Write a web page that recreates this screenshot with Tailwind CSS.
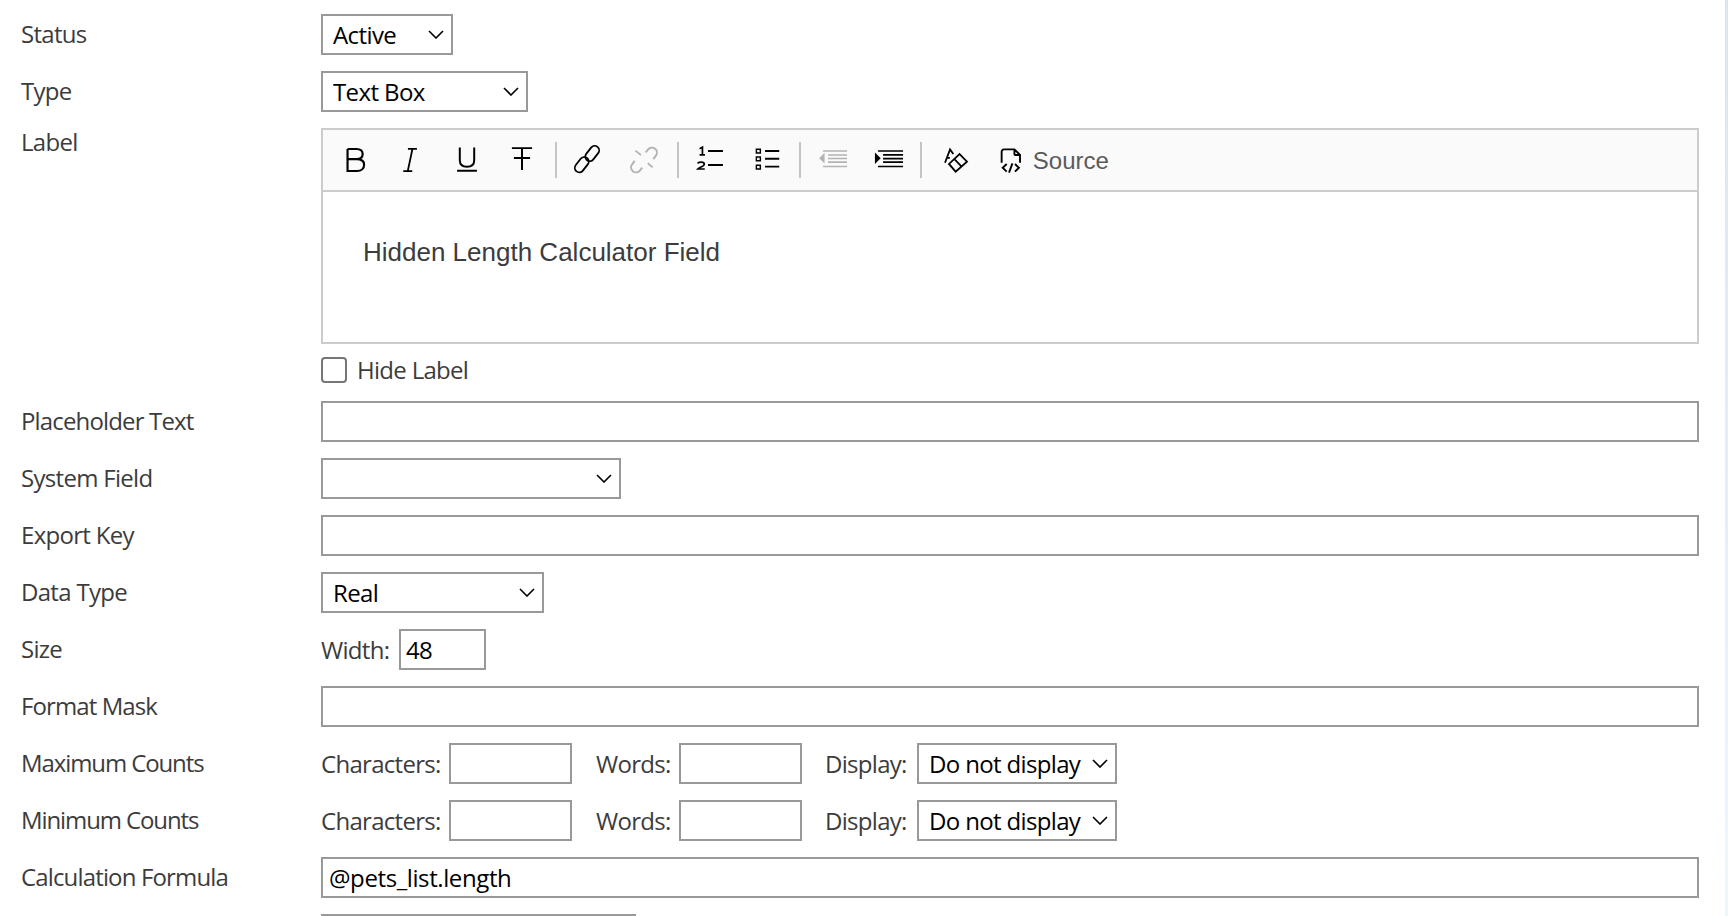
<!doctype html>
<html><head><meta charset="utf-8"><script src="https://cdn.jsdelivr.net/npm/@tailwindcss/browser@4"></script></head>
<body class="bg-white overflow-hidden">
<div class="flex h-[916px] w-[1728px] overflow-hidden bg-white font-['Open_Sans',sans-serif] text-[24px] text-[#3c3c3c]">
  <main class="flex-1 min-w-0 pt-[14px] pl-[21px] pr-[26px] flex flex-col gap-4 tracking-[-0.7px]">

    <div class="flex h-[41px] shrink-0 items-center"><label class="w-[300px] shrink-0 pb-[2px] tracking-[-0.7px]">Status</label>
      <div class="relative w-[132px] h-[41px]"><select class="appearance-none w-full h-full border-2 border-[#999] pl-[10px] text-black bg-white tracking-[-0.6px]"><option>Active</option></select><svg class="absolute right-[9px] top-[16px] w-[16px] h-[9px]" viewBox="0 0 16 9" fill="none" stroke="#000" stroke-width="1.6"><path d="M1 1l7 7 7-7"/></svg></div></div>

    <div class="flex h-[41px] shrink-0 items-center"><label class="w-[300px] shrink-0 pb-[2px]">Type</label>
      <div class="relative w-[207px] h-[41px]"><select class="appearance-none w-full h-full border-2 border-[#999] pl-[10px] text-black bg-white tracking-[-0.6px]"><option>Text Box</option></select><svg class="absolute right-[9px] top-[16px] w-[16px] h-[9px]" viewBox="0 0 16 9" fill="none" stroke="#000" stroke-width="1.6"><path d="M1 1l7 7 7-7"/></svg></div></div>

    <div class="flex shrink-0 items-start"><label class="w-[300px] shrink-0 h-[28px] flex items-center">Label</label>
      <div class="flex-1 min-w-0 flex flex-col">
        <div class="border-2 border-[#ccc] h-[216px] flex flex-col tracking-normal">
          <div class="h-[62px] shrink-0 border-b-2 border-[#ccc] bg-[#fafafa] flex items-center pl-[14.5px] text-[#000]">
            <svg class="w-9 h-9 shrink-0" viewBox="0 0 20 20" fill="none" stroke="currentColor" stroke-width="1.2"><path d="M5.3 3.9h4.9c2.3 0 3.5 1 3.5 2.8 0 1.7-1.2 2.8-3.3 2.8H5.3M10.4 9.5c2.6 0 4.1 1.1 4.1 3.1 0 2-1.5 3.5-4 3.5H5.3V3.9"/></svg>
            <svg class="w-9 h-9 shrink-0 ml-[19.5px]" viewBox="0 0 20 20" fill="none" stroke="currentColor" stroke-width="1"><path d="M8.3 3.8h5M5.7 16.2h5M10.8 3.8 8.2 16.2"/></svg>
            <svg class="w-9 h-9 shrink-0 ml-[19.5px]" viewBox="0 0 20 20" fill="none" stroke="currentColor" stroke-width="1.1"><path d="M4.5 16H15.5M6 3v7.2c0 2.4 1.5 3.6 4 3.6s4-1.2 4-3.6V3"/></svg>
            <svg class="w-9 h-9 shrink-0 ml-[19.5px]" viewBox="0 0 20 20" fill="none" stroke="currentColor" stroke-width="1.1"><path d="M4.4 3.4H15.6M5.5 8.9H14.5M10 3.4V15.6"/></svg>
            <span class="w-[2px] h-9 bg-[#c4c4c4] shrink-0 ml-[14.7px]"></span>
            <svg class="w-9 h-9 shrink-0 ml-[12.8px]" viewBox="0 0 20 20" fill="none" stroke="currentColor" stroke-width="1"><rect x="-4.7" y="-2.5" width="9.4" height="5" rx="2.5" transform="translate(12.9 6.4) rotate(-52)"/><rect x="-4.7" y="-2.5" width="9.4" height="5" rx="2.5" transform="translate(7.1 12.6) rotate(-52)"/></svg>
            <svg class="w-9 h-9 shrink-0 ml-[20.5px] text-[#b3b3b3]" viewBox="0 0 20 20" fill="none" stroke="currentColor" stroke-width="1.1"><path d="M11 5.8l1.3-1.7a2.7 2.7 0 0 1 4.2 3.6L15.2 9.6M9 14.2l-1.3 1.7a2.7 2.7 0 0 1-4.2-3.6l1.3-1.9"/><path d="M5.2 4.8 8.3 7.2M12.1 11.8l2.7 2.3" stroke-width="1"/></svg>
            <span class="w-[2px] h-9 bg-[#c4c4c4] shrink-0 ml-[15.2px]"></span>
            <svg class="w-9 h-9 shrink-0 ml-[12.5px]" viewBox="0 0 20 20" fill="none" stroke="currentColor"><path d="M8.9 5H17.2M8.9 12.8H17.2" stroke-width="1.1"/><path d="M4.2 3.7 5.8 2.9V7.2M4.2 7.2H7.2M3.2 12c.3-1 3.6-1.2 3.6.3 0 1.2-2.6 1.6-3.6 2.7h3.9" stroke-width=".95"/></svg>
            <svg class="w-9 h-9 shrink-0 ml-[21px]" viewBox="0 0 20 20" fill="none" stroke="currentColor"><path d="M8.9 5H16.8M8.9 9.3H16.8M8.9 13.7H16.8" stroke-width="1"/><path d="M4.1 4h2.2v2.1H4.1zM4.1 8.3h2.2v2.1H4.1zM4.1 12.9h2.2V15H4.1z" stroke-width=".8"/></svg>
            <span class="w-[2px] h-9 bg-[#c4c4c4] shrink-0 ml-[14.4px]"></span>
            <svg class="w-9 h-9 shrink-0 ml-[13.5px] text-[#b3b3b3]" viewBox="0 0 20 20" fill="none" stroke="currentColor" stroke-width=".9"><path d="M4.5 5H17.8M7.2 7.2H17.8M7.2 9.2H17.8M7.2 11.2H17.8M4.5 13.6H17.8"/><path d="M2.3 9 5.3 6v6z" fill="currentColor" stroke="none"/></svg>
            <svg class="w-9 h-9 shrink-0 ml-[20px]" viewBox="0 0 20 20" fill="none" stroke="currentColor" stroke-width=".95"><path d="M3.9 5H17.8M6.7 7.2H17.8M6.7 9.2H17.8M6.7 11.2H17.8M3.9 13.6H17.8"/><path d="M2.2 5.9 5.4 9l-3.2 3.2z" fill="currentColor" stroke="none"/></svg>
            <span class="w-[2px] h-9 bg-[#c4c4c4] shrink-0 ml-[13.6px]"></span>
            <svg class="w-9 h-9 shrink-0 ml-[15.7px]" viewBox="0 0 20 20" fill="none" stroke="currentColor" stroke-width="1"><path d="M3.9 11.5 6.7 4.1 8.5 6.7M4.9 8.8H6.6"/><path d="M12 6.7 16.1 10.9 9.8 16.5 6.1 12.2zM9 9.4 13.1 13.7"/></svg>
            <svg class="w-9 h-9 shrink-0 ml-[19px]" viewBox="0 0 20 20" fill="none" stroke="currentColor" stroke-width="1.05"><path d="M4.8 11.5V5.4a1.3 1.3 0 0 1 1.3-1.3H11.9L15 7.2V11.5M11.9 4.1V6.7a.5.5 0 0 0 .5.5H15M7.6 12.2 5.4 14.3 7.6 16.5M12.2 12.2 14.4 14.3 12.2 16.5M10.8 11.9 8.9 17"/></svg>
            <span class="ml-[4px] mt-[2px] font-['Liberation_Sans',sans-serif] text-[24px] text-[#5a5a5a] leading-none">Source</span>
          </div>
          <div class="flex-1 pt-[41px] pl-[40px] font-['Liberation_Sans',sans-serif] text-[26px] leading-[39px] text-[#3c3c3c]">Hidden Length Calculator Field</div>
        </div>
        <div class="mt-[13px] h-[28px] flex items-start">
          <input type="checkbox" class="appearance-none w-[26px] h-[26px] border-2 border-[#767676] rounded-[4px] bg-white shrink-0">
          <span class="ml-[10px] leading-[26px]">Hide Label</span>
        </div>
      </div>
    </div>

    <div class="flex h-[41px] shrink-0 items-center"><label class="w-[300px] shrink-0 pb-[2px] tracking-[-0.85px]">Placeholder Text</label>
      <input type="text" class="flex-1 min-w-0 h-[41px] border-2 border-[#999] bg-white"></div>

    <div class="flex h-[41px] shrink-0 items-center"><label class="w-[300px] shrink-0 pb-[2px]">System Field</label>
      <div class="relative w-[300px] h-[41px]"><select class="appearance-none w-full h-full border-2 border-[#999] pl-[10px] text-black bg-white"><option></option></select><svg class="absolute right-[9px] top-[16px] w-[16px] h-[9px]" viewBox="0 0 16 9" fill="none" stroke="#000" stroke-width="1.6"><path d="M1 1l7 7 7-7"/></svg></div></div>

    <div class="flex h-[41px] shrink-0 items-center"><label class="w-[300px] shrink-0 pb-[2px]">Export Key</label>
      <input type="text" class="flex-1 min-w-0 h-[41px] border-2 border-[#999] bg-white"></div>

    <div class="flex h-[41px] shrink-0 items-center"><label class="w-[300px] shrink-0 pb-[2px]">Data Type</label>
      <div class="relative w-[223px] h-[41px]"><select class="appearance-none w-full h-full border-2 border-[#999] pl-[10px] text-black bg-white tracking-[-0.6px]"><option>Real</option></select><svg class="absolute right-[9px] top-[16px] w-[16px] h-[9px]" viewBox="0 0 16 9" fill="none" stroke="#000" stroke-width="1.6"><path d="M1 1l7 7 7-7"/></svg></div></div>

    <div class="flex h-[41px] shrink-0 items-center"><label class="w-[300px] shrink-0 pb-[2px]">Size</label>
      <span class="w-[78px] shrink-0">Width:</span>
      <input type="text" value="48" class="w-[87px] h-[41px] border-2 border-[#999] pl-[5px] text-black bg-white tracking-[-0.6px]"></div>

    <div class="flex h-[41px] shrink-0 items-center"><label class="w-[300px] shrink-0 pb-[2px] tracking-[-0.9px]">Format Mask</label>
      <input type="text" class="flex-1 min-w-0 h-[41px] border-2 border-[#999] bg-white"></div>

    <div class="flex h-[41px] shrink-0 items-center"><label class="w-[300px] shrink-0 pb-[2px] tracking-[-1.1px]">Maximum Counts</label>
      <span class="w-[128px] shrink-0">Characters:</span>
      <input type="text" class="w-[123px] h-[41px] border-2 border-[#999] bg-white">
      <span class="w-[83px] shrink-0 ml-[24px]">Words:</span>
      <input type="text" class="w-[123px] h-[41px] border-2 border-[#999] bg-white">
      <span class="w-[92px] shrink-0 ml-[23px]">Display:</span>
      <div class="relative w-[200px] h-[41px]"><select class="appearance-none w-full h-full border-2 border-[#999] pl-[10px] text-black bg-white tracking-[-0.65px]"><option>Do not display</option></select><svg class="absolute right-[9px] top-[16px] w-[16px] h-[9px]" viewBox="0 0 16 9" fill="none" stroke="#000" stroke-width="1.6"><path d="M1 1l7 7 7-7"/></svg></div></div>

    <div class="flex h-[41px] shrink-0 items-center"><label class="w-[300px] shrink-0 pb-[2px] tracking-[-1.1px]">Minimum Counts</label>
      <span class="w-[128px] shrink-0">Characters:</span>
      <input type="text" class="w-[123px] h-[41px] border-2 border-[#999] bg-white">
      <span class="w-[83px] shrink-0 ml-[24px]">Words:</span>
      <input type="text" class="w-[123px] h-[41px] border-2 border-[#999] bg-white">
      <span class="w-[92px] shrink-0 ml-[23px]">Display:</span>
      <div class="relative w-[200px] h-[41px]"><select class="appearance-none w-full h-full border-2 border-[#999] pl-[10px] text-black bg-white tracking-[-0.65px]"><option>Do not display</option></select><svg class="absolute right-[9px] top-[16px] w-[16px] h-[9px]" viewBox="0 0 16 9" fill="none" stroke="#000" stroke-width="1.6"><path d="M1 1l7 7 7-7"/></svg></div></div>

    <div class="flex h-[41px] shrink-0 items-center"><label class="w-[300px] shrink-0 pb-[2px] tracking-[-0.85px]">Calculation Formula</label>
      <input type="text" value="@pets_list.length" class="flex-1 min-w-0 h-[41px] border-2 border-[#999] pl-[6px] text-black bg-white tracking-[-0.4px]"></div>

    <div class="flex h-[41px] shrink-0 items-center"><span class="w-[300px] shrink-0"></span>
      <div class="w-[315px] h-[41px] border-2 border-[#999] bg-white"></div></div>
  </main>
  <div class="w-[3px] shrink-0 bg-gradient-to-b from-[#dbe5f0] to-[#eef7fc]"></div>
</div>
</body></html>
